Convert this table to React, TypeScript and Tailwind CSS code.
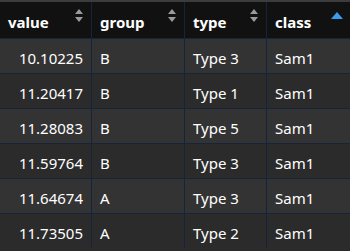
import React from "react";

const rows = [
  { value: "10.10225", group: "B", type: "Type 3", cls: "Sam1" },
  { value: "11.20417", group: "B", type: "Type 1", cls: "Sam1" },
  { value: "11.28083", group: "B", type: "Type 5", cls: "Sam1" },
  { value: "11.59764", group: "B", type: "Type 3", cls: "Sam1" },
  { value: "11.64674", group: "A", type: "Type 3", cls: "Sam1" },
  { value: "11.73505", group: "A", type: "Type 2", cls: "Sam1" },
];

const SortBoth = () => (
  <svg width="8" height="13" viewBox="0 0 8 13" className="absolute right-[8px] top-[7px]">
    <path d="M4 0 L8 5 L0 5 Z" fill="#9a9a9a" />
    <path d="M4 13 L8 8 L0 8 Z" fill="#9a9a9a" />
  </svg>
);

const SortAsc = () => (
  <svg width="12" height="7" viewBox="0 0 12 7" className="absolute right-[7px] top-[10px]">
    <path d="M6 0 L12 7 L0 7 Z" fill="#3a9cf0" />
  </svg>
);

const cols = [
  { key: "value", w: "w-[91px]" },
  { key: "group", w: "w-[93px]" },
  { key: "type", w: "w-[82px]" },
  { key: "class", w: "flex-1" },
];

export default function App() {
  return (
    <div
      className="w-[350px] h-[251px] bg-[#2b2b2b] overflow-hidden text-white"
      style={{ fontFamily: '"Segoe UI", "Noto Sans", sans-serif' }}
    >
      <div className="h-[2px] bg-[#3c3c3c]" />
      <div className="flex h-[36px] bg-[#111111] text-[15px] font-bold">
        {cols.map((c, i) => (
          <div
            key={c.key}
            className={`relative ${c.w} pl-[8px] pt-[9px] ${i > 0 ? "border-l border-[#17233a]" : ""}`}
          >
            {c.key}
            {c.key === "class" ? <SortAsc /> : <SortBoth />}
          </div>
        ))}
      </div>
      {rows.map((r, i) => (
        <div
          key={i}
          className={`flex h-[35px] border-t border-[#17233a] text-[15px] ${
            i % 2 === 0 ? "bg-[#333333]" : "bg-[#2b2b2b]"
          }`}
        >
          <div className="w-[91px] pr-[8px] pt-[8px] text-right">{r.value}</div>
          <div className="w-[93px] pl-[8px] pt-[8px] border-l border-[#17233a]">{r.group}</div>
          <div className="w-[82px] pl-[8px] pt-[8px] border-l border-[#17233a]">{r.type}</div>
          <div className="flex-1 pl-[8px] pt-[8px] border-l border-[#17233a]">{r.cls}</div>
        </div>
      ))}
    </div>
  );
}
